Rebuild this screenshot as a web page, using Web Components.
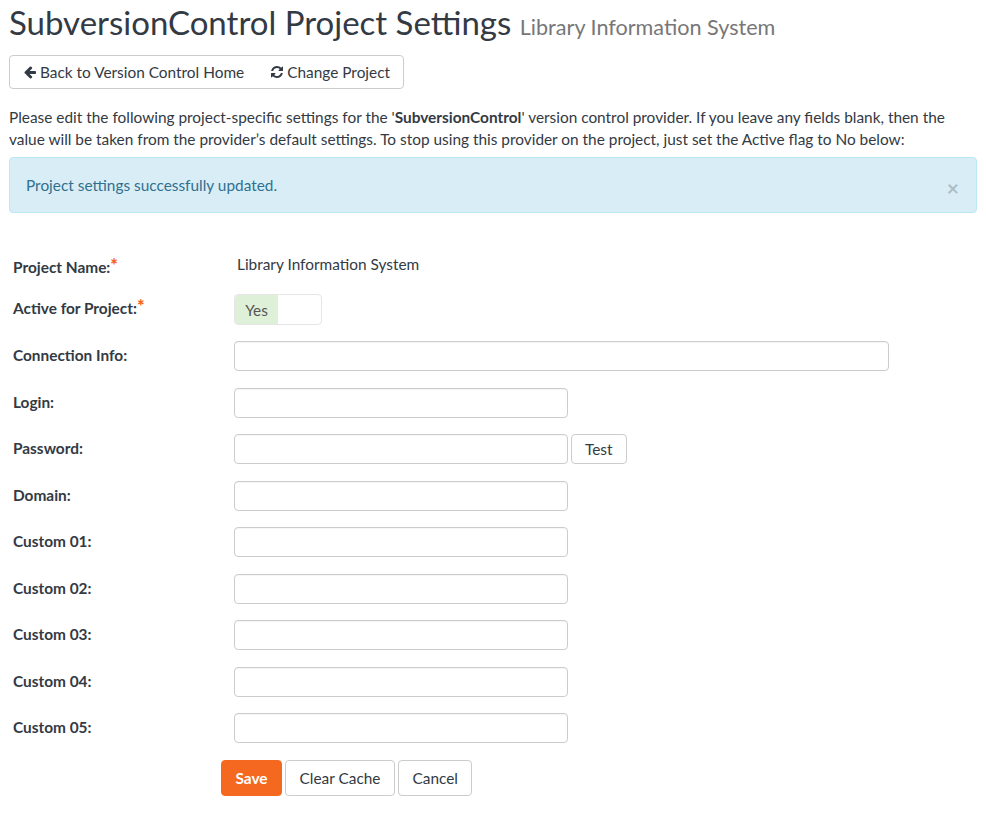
<!DOCTYPE html>
<html>
<head>
<meta charset="utf-8">
<title>SubversionControl Project Settings</title>
<style>
  html, body { margin: 0; padding: 0; background: #fff; }
  body { font-family: Lato, "Liberation Sans", sans-serif; font-size: 15.4px; line-height: 22px; color: #333a44; }
  settings-page { width: 968px; margin-left: 9px; }
</style>
</head>
<body>
<settings-page>
  <page-title slot="title" sub="Library Information System">SubversionControl Project Settings</page-title>
  <button-bar>
    <bar-button icon="back">Back to Version Control Home</bar-button>
    <bar-button icon="refresh">Change Project</bar-button>
  </button-bar>
  <intro-text>Please edit the following project-specific settings for the '<b>SubversionControl</b>' version control provider. If you leave any fields blank, then the value will be taken from the provider’s default settings. To stop using this provider on the project, just set the Active flag to No below:</intro-text>
  <info-alert>Project settings successfully updated.</info-alert>
  <settings-form>
    <form-row label="Project Name:" required kind="text"><span>Library Information System</span></form-row>
    <form-row label="Active for Project:" required kind="toggle"><yes-toggle></yes-toggle></form-row>
    <form-row label="Connection Info:"><text-field size="wide"></text-field></form-row>
    <form-row label="Login:"><text-field></text-field></form-row>
    <form-row label="Password:"><text-field></text-field><action-button small>Test</action-button></form-row>
    <form-row label="Domain:"><text-field></text-field></form-row>
    <form-row label="Custom 01:"><text-field></text-field></form-row>
    <form-row label="Custom 02:"><text-field></text-field></form-row>
    <form-row label="Custom 03:"><text-field></text-field></form-row>
    <form-row label="Custom 04:"><text-field></text-field></form-row>
    <form-row label="Custom 05:"><text-field></text-field></form-row>
  </settings-form>
  <form-actions>
    <action-button primary>Save</action-button>
    <action-button>Clear Cache</action-button>
    <action-button>Cancel</action-button>
  </form-actions>
</settings-page>

<script>
const ICONS = {
  back: 'M1664 896v128q0 53-32.5 90.5t-84.5 37.5h-704l293 294q38 36 38 90t-38 90l-75 76q-37 37-90 37-52 0-91-37l-651-652q-37-37-37-90 0-52 37-91l651-650q38-38 91-38 52 0 90 38l75 74q38 38 38 91t-38 91l-293 293h704q52 0 84.5 37.5t32.5 90.5z',
  refresh: 'M1639 1056q0 5-1 7-64 268-268 434.5t-478 166.5q-146 0-282.5-55t-243.5-157l-129 129q-19 19-45 19t-45-19-19-45v-448q0-26 19-45t45-19h448q26 0 45 19t19 45-19 45l-137 137q71 66 161 102t187 36q134 0 250-65t186-179q11-17 53-117 8-23 30-23h192q13 0 22.5 9.5t9.5 22.5zm25-800v448q0 26-19 45t-45 19h-448q-26 0-45-19t-19-45 19-45l138-138q-148-137-349-137-134 0-250 65t-186 179q-11 17-53 117-8 23-30 23h-199q-13 0-22.5-9.5t-9.5-22.5v-7q65-268 270-434.5t480-166.5q146 0 284 55.5t245 156.5l130-129q19-19 45-19t45 19 19 45z'
};

class Base extends HTMLElement {
  connectedCallback() {
    if (this.shadowRoot) return;
    this.attachShadow({ mode: 'open' });
    this.shadowRoot.innerHTML = this.render();
  }
}

class SettingsPage extends Base {
  render() { return `<style>:host { display: block; }</style><slot name="title"></slot><slot></slot>`; }
}
class PageTitle extends Base {
  render() {
    return `<style>
      :host { display: block; font-size: 33px; line-height: 36px; color: #333a44; padding-top: 4px; height: 50px; box-sizing: border-box; white-space: nowrap; }
      small { font-size: 21.6px; color: #777; }
    </style><slot></slot> <small>${this.getAttribute('sub')}</small>`;
  }
}
class ButtonBar extends Base {
  render() {
    return `<style>
      :host { display: flex; width: max-content; height: 34px; box-sizing: border-box; border: 1px solid #ccc; border-radius: 4px; margin-top: 5px; }
      ::slotted(bar-button + bar-button) { border-left: 1px solid #ccc; }
    </style><slot></slot>`;
  }
}
class BarButton extends Base {
  render() {
    return `<style>
      :host { display: flex; align-items: center; gap: 3px; padding: 0 13px; color: #333a44; white-space: nowrap; }
      svg { width: 14px; height: 14px; fill: currentColor; }
    </style><svg viewBox="0 0 1792 1792"><path d="${ICONS[this.getAttribute('icon')]}"/></svg><slot></slot>`;
  }
}
class IntroText extends Base {
  render() {
    return `<style>
      :host { display: block; margin-top: 17px; height: 51px; }
      ::slotted(b) { font-weight: 700; }
    </style><slot></slot>`;
  }
}
class InfoAlert extends Base {
  render() {
    return `<style>
      :host { display: flex; justify-content: space-between; align-items: center; box-sizing: border-box; height: 56px; padding: 0 17px 0 16px; background: #d9edf7; border: 1px solid #bce8f1; border-radius: 4px; color: #31708f; }
      span { font-size: 21px; font-weight: 700; color: #000; opacity: .2; line-height: 1; position: relative; top: 2px; }
    </style><slot></slot><span>×</span>`;
  }
}
class SettingsForm extends Base {
  render() { return `<style>:host { display: block; margin-top: 39px; }</style><slot></slot>`; }
}
class FormRow extends Base {
  render() {
    const star = this.hasAttribute('required') ? '<i>*</i>' : '';
    const kind = this.getAttribute('kind') || 'field';
    return `<style>
      :host { display: flex; align-items: flex-start; height: 46.5px; }
      :host([kind="text"]) { height: 41px; }
      :host([kind="toggle"]) { height: 48px; }
      label { width: 225px; box-sizing: border-box; padding-left: 4px; font-weight: 700; color: #333a44; white-space: nowrap; padding-top: 3px; }
      :host([kind="text"]) label { padding-top: 4px; }
      :host([kind="toggle"]) label { padding-top: 4px; }
      i { font-style: normal; font-weight: 900; color: #f4661e; font-size: 18px; line-height: 0; position: relative; top: -1px; }
      .v { display: flex; gap: 3px; }
      :host([kind="text"]) .v { padding: 1px 0 0 3px; }
      :host([kind="toggle"]) .v { padding-top: 1px; }
    </style><label>${this.getAttribute('label')}${star}</label><div class="v" data-kind="${kind}"><slot></slot></div>`;
  }
}
class TextField extends Base {
  render() {
    return `<style>
      :host { display: block; }
      input { display: block; box-sizing: border-box; width: 334px; height: 30px; border: 1px solid #ccc; border-radius: 4px; background: #fff; padding: 0 8px; font: inherit; outline: none; box-shadow: inset 0 1px 1px rgba(0,0,0,.04); }
      :host([size="wide"]) input { width: 655px; }
    </style><input type="text">`;
  }
}
class YesToggle extends Base {
  render() {
    return `<style>
      :host { display: block; width: 88px; height: 31px; box-sizing: border-box; border: 1px solid #e6e6e6; border-radius: 4px; overflow: hidden; }
      span { display: flex; align-items: center; justify-content: center; width: 43px; height: 100%; background: #dff0d8; color: #555; }
    </style><span>Yes</span>`;
  }
}
class ActionButton extends Base {
  render() {
    return `<style>
      :host { display: flex; align-items: center; justify-content: center; box-sizing: border-box; height: 36px; padding: 0 13.5px; border: 1px solid #ccc; border-radius: 4px; background: #fff; color: #333a44; white-space: nowrap; }
      :host([primary]) { background: #f4691f; border-color: #f4691f; color: #fff; font-weight: 700; }
      :host([small]) { height: 30px; padding: 0 13px; }
    </style><slot></slot>`;
  }
}
class FormActions extends Base {
  render() {
    return `<style>:host { display: flex; gap: 3px; margin-left: 212px; }</style><slot></slot>`;
  }
}

customElements.define('settings-page', SettingsPage);
customElements.define('page-title', PageTitle);
customElements.define('button-bar', ButtonBar);
customElements.define('bar-button', BarButton);
customElements.define('intro-text', IntroText);
customElements.define('info-alert', InfoAlert);
customElements.define('settings-form', SettingsForm);
customElements.define('form-row', FormRow);
customElements.define('text-field', TextField);
customElements.define('yes-toggle', YesToggle);
customElements.define('action-button', ActionButton);
customElements.define('form-actions', FormActions);
</script>
</body>
</html>
